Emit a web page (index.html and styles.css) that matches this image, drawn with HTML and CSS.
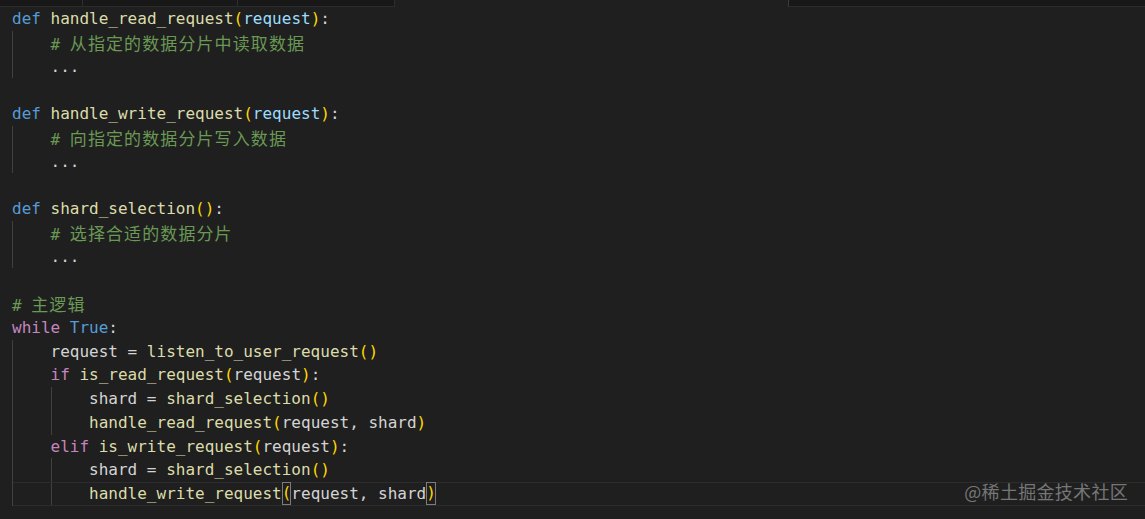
FILE: index.html
```html
<!DOCTYPE html>
<html lang="zh">
<head>
<meta charset="utf-8">
<title>shard</title>
<link rel="stylesheet" href="styles.css">
</head>
<body>
<div class="page">
  <div class="tabs">
    <div class="tab t1"></div>
    <div class="tab t2"></div>
    <div class="tab t3"></div>
    <div class="gap"></div>
    <div class="tab t4"></div>
  </div>
  <div class="editor">
    <div class="line"><span class="k">def</span> <span class="f">handle_read_request</span><span class="b">(</span><span class="p">request</span><span class="b">)</span>:</div>
    <div class="block">
      <div class="line"><span class="cm"># <span class="zh">从指定的数据分片中读取数据</span></span></div>
      <div class="line">...</div>
    </div>
    <div class="line"></div>
    <div class="line"><span class="k">def</span> <span class="f">handle_write_request</span><span class="b">(</span><span class="p">request</span><span class="b">)</span>:</div>
    <div class="block">
      <div class="line"><span class="cm"># <span class="zh">向指定的数据分片写入数据</span></span></div>
      <div class="line">...</div>
    </div>
    <div class="line"></div>
    <div class="line"><span class="k">def</span> <span class="f">shard_selection</span><span class="b">()</span>:</div>
    <div class="block">
      <div class="line"><span class="cm"># <span class="zh">选择合适的数据分片</span></span></div>
      <div class="line">...</div>
    </div>
    <div class="line"></div>
    <div class="line"><span class="cm"># <span class="zh">主逻辑</span></span></div>
    <div class="line"><span class="c">while</span> <span class="k">True</span>:</div>
    <div class="block">
      <div class="line">request = <span class="f">listen_to_user_request</span><span class="b">()</span></div>
      <div class="line"><span class="c">if</span> <span class="f">is_read_request</span><span class="b">(</span>request<span class="b">)</span>:</div>
      <div class="block">
        <div class="line">shard = <span class="f">shard_selection</span><span class="b">()</span></div>
        <div class="line"><span class="f">handle_read_request</span><span class="b">(</span>request, shard<span class="b">)</span></div>
      </div>
      <div class="line"><span class="c">elif</span> <span class="f">is_write_request</span><span class="b">(</span>request<span class="b">)</span>:</div>
      <div class="block">
        <div class="line">shard = <span class="f">shard_selection</span><span class="b">()</span></div>
        <div class="line cur"><span class="f">handle_write_request</span><span class="b match">(</span>request, shard<span class="b match">)</span></div>
      </div>
    </div>
  </div>
  <div class="watermark">@稀土掘金技术社区</div>
</div>
</body>
</html>
```

FILE: styles.css
```css
html, body {
  margin: 0;
  padding: 0;
  background: #1f1f1f;
}

.page {
  position: relative;
  width: 1145px;
  height: 519px;
  overflow: hidden;
  background: #1f1f1f;
}

.tabs {
  display: flex;
  height: 7px;
}

.tab {
  height: 6px;
  background: #181818;
  border-bottom: 1px solid #2b2b2b;
  border-right: 1px solid #2e2e2e;
}

.t1 { width: 82px; }
.t2 { width: 154px; }
.t3 { width: 156px; }
.gap { width: 393px; }
.t4 {
  flex: 1;
  border-right: none;
  border-left: 1px solid #3a3a3a;
}

.editor {
  padding-left: 12px;
  font-family: "DejaVu Sans Mono", "Noto Sans CJK SC", monospace;
  font-size: 16px;
  color: #d4d4d4;
}

.line {
  height: 23.75px;
  line-height: 23.75px;
  white-space: pre;
}

.block {
  border-left: 1px solid #404040;
  padding-left: calc(4ch - 1px);
}

.cur {
  box-sizing: border-box;
  margin-left: -76px;
  padding-left: 76px;
  border-top: 1px solid #2c2c2c;
  border-bottom: 1px solid #2c2c2c;
  line-height: 21.75px;
}

.k { color: #569cd6; }
.c { color: #c586c0; }
.f { color: #dcdcaa; }
.p { color: #9cdcfe; }
.b { color: #ffd700; }
.cm { color: #6a9955; }

.zh {
  font-family: "Noto Sans CJK SC", sans-serif;
  font-size: 17px;
  letter-spacing: 1.1px;
}

.match {
  display: inline-block;
  box-sizing: border-box;
  height: 23px;
  line-height: 21.75px;
  vertical-align: top;
  margin-top: -1px;
  outline: 1px solid #7c7c7c;
  outline-offset: -1px;
}

.watermark {
  position: absolute;
  right: 17px;
  bottom: 15px;
  font-family: "Noto Sans CJK SC", sans-serif;
  font-size: 18px;
  color: #767676;
  letter-spacing: 0.3px;
}
```
